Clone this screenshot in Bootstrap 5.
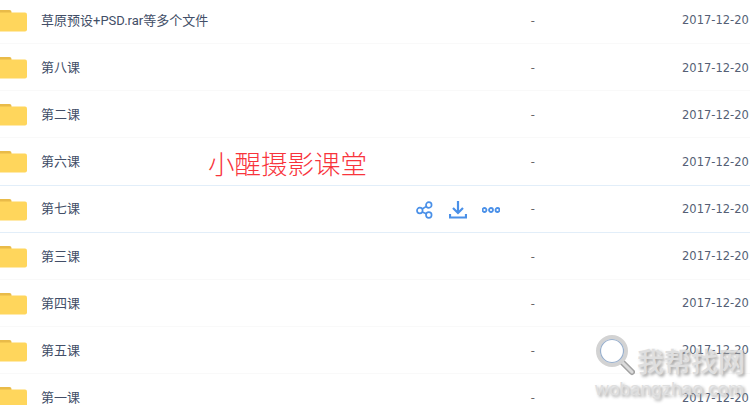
<!DOCTYPE html>
<html lang="zh-CN">

<head>
    <meta charset="UTF-8">
    <meta name="viewport" content="width=device-width, initial-scale=1.0">
    <title>文件列表</title>
    <link href="https://cdn.jsdelivr.net/npm/bootstrap@5.3.0/dist/css/bootstrap.min.css" rel="stylesheet">
    <style>
        html, body {
            height: 100%;
            overflow: hidden;
        }

        body {
            background-color: #ffffff;
            font-family: Roboto, "Noto Sans CJK SC", sans-serif;
            position: relative;
        }

        .file-list {
            margin-top: -3px;
        }

        .file-row {
            height: 47.15px;
            border-bottom: 1px solid #f9f9f9;
            font-size: 13px;
            color: #424e67;
        }

        .file-row.is-hover,
        .file-row.before-hover {
            border-bottom-color: #e2eef9;
        }

        .folder-icon {
            width: 27px;
            height: 24px;
            flex: none;
            margin-right: 14px;
        }

        .file-name {
            width: 362px;
            flex: none;
            padding-top: 1px;
        }

        .file-actions {
            width: 128px;
            flex: none;
            padding-left: 13px;
            padding-top: 2px;
            gap: 15px;
        }

        .file-size {
            flex: 1;
            color: #666;
            padding-top: 1px;
        }

        .file-date {
            width: 68px;
            flex: none;
            padding-top: 2px;
            font-family: "DejaVu Sans", sans-serif;
            font-size: 11.5px;
            color: #555f75;
            white-space: nowrap;
        }

        .site-title {
            position: absolute;
            left: 208px;
            top: 147px;
            font-family: "Noto Sans CJK SC", sans-serif;
            font-weight: 300;
            font-size: 26.500px;
            line-height: 32px;
            color: #f8343c;
        }

        .watermark {
            position: absolute;
            left: 595px;
            top: 335px;
            width: 155px;
            color: #dcdcdc;
            text-shadow: 2px 2px 3px #999999;
            opacity: .9;
        }

        .watermark-top {
            gap: 2px;
            height: 44px;
        }

        .watermark-cn {
            font-family: "Noto Sans CJK SC", sans-serif;
            font-weight: 500;
            font-size: 27px;
            line-height: 32px;
            margin-top: 10px;
        }

        .watermark-en {
            font-family: "Liberation Sans", sans-serif;
            font-size: 19px;
            line-height: 20px;
            white-space: nowrap;
        }
    </style>
</head>

<body>
    <svg width="0" height="0" class="position-absolute">
        <symbol id="folder" viewBox="0 0 27 24">
            <path d="M0 2h9.500a2 2 0 0 1 2 2v2H0z" fill="#e9bb49"/>
            <path d="M0 4.500h25a2 2 0 0 1 2 2V21.500a2 2 0 0 1-2 2H0z" fill="#ffd65c"/>
        </symbol>
    </svg>

    <div class="file-list">
        <div class="file-row d-flex align-items-center">
            <svg class="folder-icon"><use href="#folder"/></svg>
            <span class="file-name">草原预设+PSD.rar等多个文件</span>
            <span class="file-actions"></span>
            <span class="file-size">-</span>
            <span class="file-date">2017-12-20</span>
        </div>
        <div class="file-row d-flex align-items-center">
            <svg class="folder-icon"><use href="#folder"/></svg>
            <span class="file-name">第八课</span>
            <span class="file-actions"></span>
            <span class="file-size">-</span>
            <span class="file-date">2017-12-20</span>
        </div>
        <div class="file-row d-flex align-items-center">
            <svg class="folder-icon"><use href="#folder"/></svg>
            <span class="file-name">第二课</span>
            <span class="file-actions"></span>
            <span class="file-size">-</span>
            <span class="file-date">2017-12-20</span>
        </div>
        <div class="file-row before-hover d-flex align-items-center">
            <svg class="folder-icon"><use href="#folder"/></svg>
            <span class="file-name">第六课</span>
            <span class="file-actions"></span>
            <span class="file-size">-</span>
            <span class="file-date">2017-12-20</span>
        </div>
        <div class="file-row is-hover d-flex align-items-center">
            <svg class="folder-icon"><use href="#folder"/></svg>
            <span class="file-name">第七课</span>
            <span class="file-actions d-flex align-items-center">
                <svg width="18" height="18" viewBox="0 0 18 18" fill="none" stroke="#4a90e8" stroke-width="1.700">
                    <circle cx="3.800" cy="9.500" r="2.800"/>
                    <circle cx="12.800" cy="4" r="2.800"/>
                    <circle cx="12.800" cy="14" r="2.800"/>
                    <path d="M6.200 8l4.200-2.600M6.200 11l4.200 1.700"/>
                </svg>
                <svg width="18" height="18" viewBox="0 0 18 18" fill="none" stroke="#4a90e8" stroke-width="2.200">
                    <path d="M9 0v11M4 7l5 5 5-5M1 13v3.500h16V13"/>
                </svg>
                <svg width="18" height="8" viewBox="0 0 18 8" fill="none" stroke="#4a90e8" stroke-width="1.800">
                    <circle cx="2.500" cy="4" r="2"/>
                    <circle cx="9" cy="4" r="2"/>
                    <circle cx="15.500" cy="4" r="2"/>
                </svg>
            </span>
            <span class="file-size">-</span>
            <span class="file-date">2017-12-20</span>
        </div>
        <div class="file-row d-flex align-items-center">
            <svg class="folder-icon"><use href="#folder"/></svg>
            <span class="file-name">第三课</span>
            <span class="file-actions"></span>
            <span class="file-size">-</span>
            <span class="file-date">2017-12-20</span>
        </div>
        <div class="file-row d-flex align-items-center">
            <svg class="folder-icon"><use href="#folder"/></svg>
            <span class="file-name">第四课</span>
            <span class="file-actions"></span>
            <span class="file-size">-</span>
            <span class="file-date">2017-12-20</span>
        </div>
        <div class="file-row d-flex align-items-center">
            <svg class="folder-icon"><use href="#folder"/></svg>
            <span class="file-name">第五课</span>
            <span class="file-actions"></span>
            <span class="file-size">-</span>
            <span class="file-date">2017-12-20</span>
        </div>
        <div class="file-row d-flex align-items-center">
            <svg class="folder-icon"><use href="#folder"/></svg>
            <span class="file-name">第一课</span>
            <span class="file-actions"></span>
            <span class="file-size">-</span>
            <span class="file-date">2017-12-20</span>
        </div>
    </div>

    <div class="site-title">小醒摄影课堂</div>

    <div class="watermark">
        <div class="watermark-top d-flex">
            <svg width="40" height="44" viewBox="0 0 40 44" fill="none" class="flex-none">
                <path d="M27 27l10 10" stroke="#999999" stroke-width="6" stroke-linecap="round"/>
                <path d="M27 27l10 10" stroke="#d8d8d8" stroke-width="3" stroke-linecap="round"/>
                <circle cx="17" cy="16" r="14" fill="#ffffff" fill-opacity=".7" stroke="#cfcfcf" stroke-width="4"/>
                <circle cx="17" cy="16" r="11.500" stroke="#8fa8c8" stroke-width="1.200"/>
            </svg>
            <div class="watermark-cn">我帮找网</div>
        </div>
        <div class="watermark-en">wobangzhao.com</div>
    </div>
</body>

</html>
